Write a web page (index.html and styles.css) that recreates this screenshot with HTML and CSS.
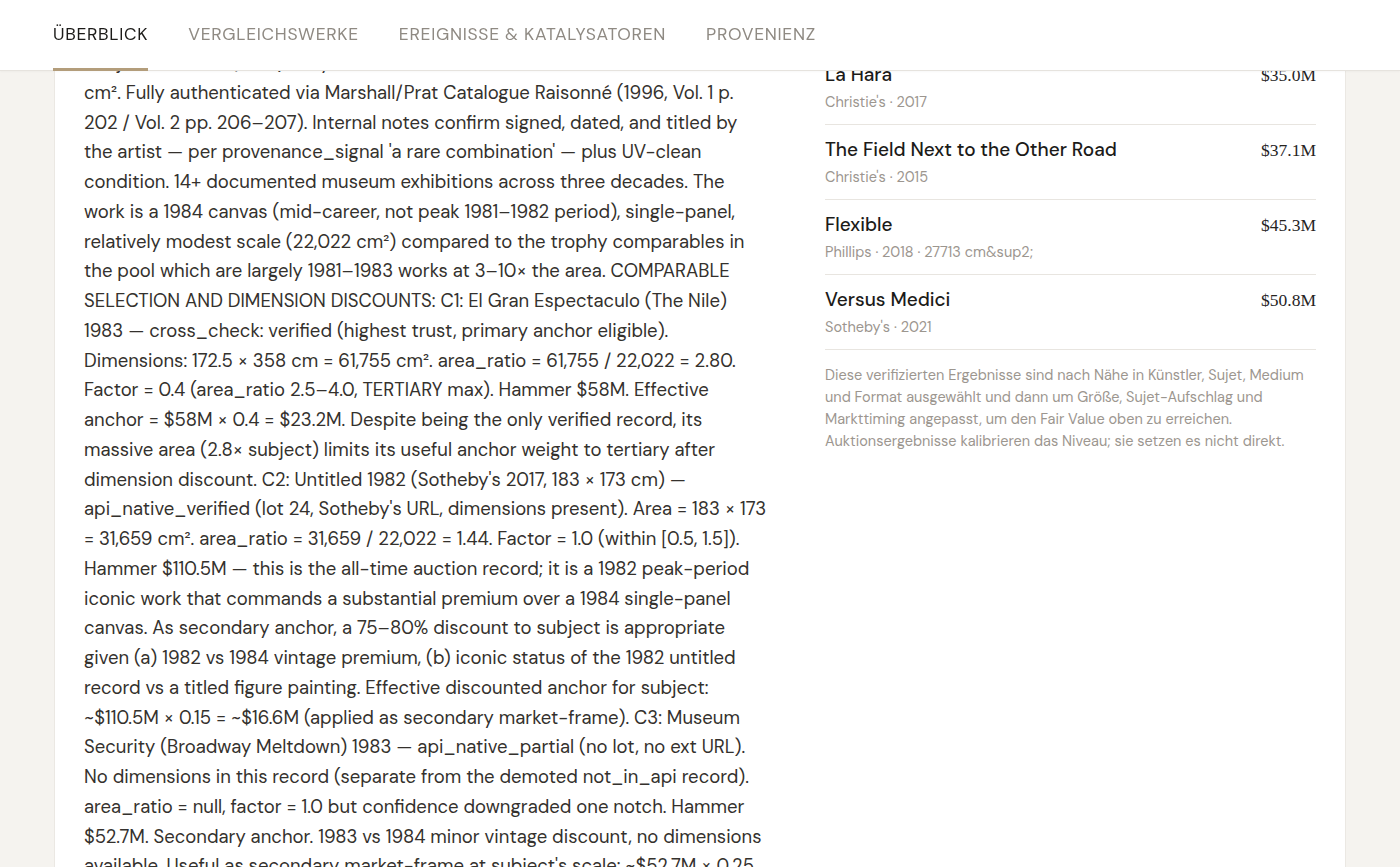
FILE: index.html
```html
<!DOCTYPE html>
<html lang="de">
<head>
    <meta charset="UTF-8">
    <title>Bewertung – Überblick</title>
    <link rel="stylesheet" href="styles.css">
</head>
<body>
    <header class="tabbar">
        <nav class="tabs">
            <a class="tab active" href="#ueberblick">Überblick</a>
            <a class="tab" href="#vergleichswerke">Vergleichswerke</a>
            <a class="tab" href="#ereignisse">Ereignisse &amp; Katalysatoren</a>
            <a class="tab" href="#provenienz">Provenienz</a>
        </nav>
    </header>

    <main class="page">
        <section class="card" id="ueberblick">
            <div class="rationale">
                <p>Subject: Untitled (1984), acrylic and oilstick on canvas. 121 × 182 cm = 22,022 cm². Fully authenticated via Marshall/Prat Catalogue Raisonné (1996, Vol. 1 p. 202 / Vol. 2 pp. 206–207). Internal notes confirm signed, dated, and titled by the artist — per provenance_signal 'a rare combination' — plus UV-clean condition. 14+ documented museum exhibitions across three decades. The work is a 1984 canvas (mid-career, not peak 1981–1982 period), single-panel, relatively modest scale (22,022 cm²) compared to the trophy comparables in the pool which are largely 1981–1983 works at 3–10× the area. COMPARABLE SELECTION AND DIMENSION DISCOUNTS: C1: El Gran Espectaculo (The Nile) 1983 — cross_check: verified (highest trust, primary anchor eligible). Dimensions: 172.5 × 358 cm = 61,755 cm². area_ratio = 61,755 / 22,022 = 2.80. Factor = 0.4 (area_ratio 2.5–4.0, TERTIARY max). Hammer $58M. Effective anchor = $58M × 0.4 = $23.2M. Despite being the only verified record, its massive area (2.8× subject) limits its useful anchor weight to tertiary after dimension discount. C2: Untitled 1982 (Sotheby's 2017, 183 × 173 cm) — api_native_verified (lot 24, Sotheby's URL, dimensions present). Area = 183 × 173 = 31,659 cm². area_ratio = 31,659 / 22,022 = 1.44. Factor = 1.0 (within [0.5, 1.5]). Hammer $110.5M — this is the all-time auction record; it is a 1982 peak-period iconic work that commands a substantial premium over a 1984 single-panel canvas. As secondary anchor, a 75–80% discount to subject is appropriate given (a) 1982 vs 1984 vintage premium, (b) iconic status of the 1982 untitled record vs a titled figure painting. Effective discounted anchor for subject: ~$110.5M × 0.15 = ~$16.6M (applied as secondary market-frame). C3: Museum Security (Broadway Meltdown) 1983 — api_native_partial (no lot, no ext URL). No dimensions in this record (separate from the demoted not_in_api record). area_ratio = null, factor = 1.0 but confidence downgraded one notch. Hammer $52.7M. Secondary anchor. 1983 vs 1984 minor vintage discount, no dimensions available. Useful as secondary market-frame at subject's scale: ~$52.7M × 0.25 = ~$13.2M. Weighted blend of the three anchors lands the fair value in the upper teens.</p>
            </div>

            <aside class="comps">
                <ul class="comp-list">
                    <li class="comp">
                        <div class="comp-head">
                            <span class="comp-title">La Hara</span>
                            <span class="comp-price">$35.0M</span>
                        </div>
                        <div class="comp-meta">Christie's · 2017</div>
                    </li>
                    <li class="comp">
                        <div class="comp-head">
                            <span class="comp-title">The Field Next to the Other Road</span>
                            <span class="comp-price">$37.1M</span>
                        </div>
                        <div class="comp-meta">Christie's · 2015</div>
                    </li>
                    <li class="comp">
                        <div class="comp-head">
                            <span class="comp-title">Flexible</span>
                            <span class="comp-price">$45.3M</span>
                        </div>
                        <div class="comp-meta">Phillips · 2018 · 27713 cm&amp;sup2;</div>
                    </li>
                    <li class="comp">
                        <div class="comp-head">
                            <span class="comp-title">Versus Medici</span>
                            <span class="comp-price">$50.8M</span>
                        </div>
                        <div class="comp-meta">Sotheby's · 2021</div>
                    </li>
                </ul>
                <p class="comp-note">Diese verifizierten Ergebnisse sind nach Nähe in Künstler, Sujet, Medium und Format ausgewählt und dann um Größe, Sujet-Aufschlag und Markttiming angepasst, um den Fair Value oben zu erreichen. Auktionsergebnisse kalibrieren das Niveau; sie setzen es nicht direkt.</p>
            </aside>
        </section>
    </main>
</body>
</html>
```

FILE: styles.css
```css
body {
    font-family: 'DM Sans', 'Inter', 'Noto Sans', sans-serif;
    margin: 0;
    padding: 0;
    background-color: #f5f3ef;
    color: #33312e;
}

/* sticky tab bar sits over the scrolled content */
.tabbar {
    position: fixed;
    top: 0;
    left: 0;
    right: 0;
    z-index: 10;
    background-color: #fff;
    border-bottom: 1px solid #e6e3de;
    box-shadow: 0 1px 2px rgba(0, 0, 0, 0.03);
}
.tabs {
    max-width: 1294px;
    margin: 0 auto -1px;
    display: flex;
    gap: 40px;
}
.tab {
    display: flex;
    align-items: center;
    height: 68px;
    border-bottom: 3px solid transparent;
    font-size: 17.5px;
    letter-spacing: 0.04em;
    text-transform: uppercase;
    text-decoration: none;
    color: #8f8a83;
}
.tab.active {
    color: #1c1b19;
    border-bottom-color: #b39d7b;
}

.page {
    max-width: 1292px;
    margin: 0 auto;
    padding-top: 18px;
}
.card {
    display: grid;
    grid-template-columns: 684px 1fr;
    gap: 57px;
    padding: 30px 29px 40px;
    background-color: #fff;
    border: 1px solid #ebe8e3;
}

.rationale p {
    margin: 0;
    font-size: 18.5px;
    line-height: 29.75px;
    color: #34312d;
}

.comp-list {
    list-style: none;
    margin: 1px 0 0;
    padding: 0;
}
.comp {
    padding: 12px 0;
    border-bottom: 1px solid #e8e5e0;
}
.comp-head {
    display: flex;
    justify-content: space-between;
    align-items: baseline;
    gap: 16px;
}
.comp-title {
    font-size: 19px;
    line-height: 25px;
    font-weight: 500;
    color: #1c1b19;
}
.comp-price {
    font-family: 'Liberation Serif', 'DejaVu Serif', serif;
    font-variant-numeric: oldstyle-nums;
    font-size: 17.5px;
    color: #26241f;
}
.comp-meta {
    margin-top: 5px;
    font-size: 14.5px;
    line-height: 20px;
    color: #9c968f;
}
.comp-note {
    margin: 14px 0 0;
    font-size: 14.5px;
    line-height: 22px;
    color: #9c968f;
}
```
